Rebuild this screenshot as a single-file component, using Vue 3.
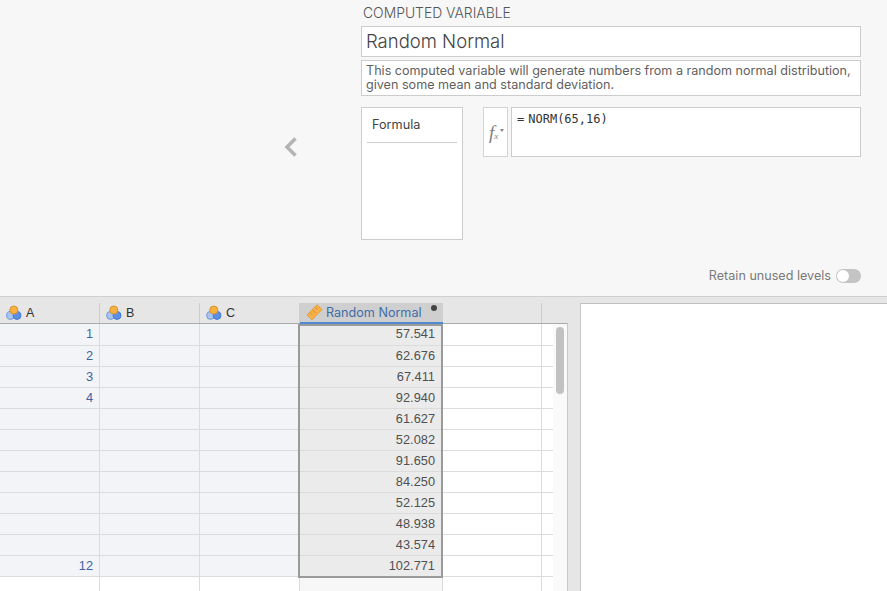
<template>
  <div class="app">
    <section class="editor">
      <div class="back">
        <svg width="16" height="22" viewBox="0 0 16 22"><path d="M12.5 2.5 L4 11 L12.5 19.5" fill="none" stroke="#b4b4b4" stroke-width="3.6" /></svg>
      </div>
      <div class="form">
        <div class="kicker">COMPUTED VARIABLE</div>
        <div class="name">Random Normal</div>
        <div class="desc">This computed variable will generate numbers from a random normal distribution,<br>given some mean and standard deviation.</div>
        <div class="formula-row">
          <div class="formula-tab">
            <div class="tab-label">Formula</div>
          </div>
          <div class="fx">
            <span class="fx-f">f</span><span class="fx-x">x</span>
            <span class="fx-caret"></span>
          </div>
          <div class="formula-input"><span class="eq">=</span>NORM(65,16)</div>
        </div>
      </div>
      <div class="retain">
        <span>Retain unused levels</span>
        <span class="toggle"><span class="knob"></span></span>
      </div>
    </section>

    <section class="bottom">
      <div class="sheet">
        <div class="grid">
          <div class="head-row">
            <div v-for="col in columns" :key="col.key" class="th" :class="[col.cls, { active: col.active }]">
              <svg v-if="col.active" class="ico" width="18" height="17" viewBox="0 0 18 17">
                <path d="M1 11 L11 0.8 L16 5.5 L6 15.8 Z" fill="#f5b04c" stroke="#e8a035" stroke-width="1" />
                <path d="M4 8.5 L6 10.5 M6.5 6 L9.5 9 M9.5 3.5 L11.5 5.5" stroke="#d98c20" stroke-width="1" fill="none" />
              </svg>
              <svg v-else-if="col.name" class="ico" width="16" height="16" viewBox="0 0 16 16">
                <circle cx="4.6" cy="10.4" r="4" fill="#a9c4f2" stroke="#6e97dd" />
                <circle cx="11" cy="10.4" r="4" fill="#5b8fe6" stroke="#4a7bcb" />
                <circle cx="7.8" cy="5" r="4" fill="#f6b143" stroke="#dc9326" />
              </svg>
              <span>{{ col.name }}</span>
              <span v-if="col.active" class="dot"></span>
            </div>
          </div>
          <div v-for="(row, i) in rows" :key="i" class="row">
            <div class="td ca num">{{ row.a }}</div>
            <div class="td cb"></div>
            <div class="td cc"></div>
            <div class="td cr">{{ row.r }}</div>
            <div class="td ce"></div>
            <div class="td cf"></div>
          </div>
          <div class="row last">
            <div class="td ca"></div>
            <div class="td cb"></div>
            <div class="td cc"></div>
            <div class="td cr"></div>
            <div class="td ce"></div>
            <div class="td cf"></div>
          </div>
          <div class="selection"></div>
        </div>
        <div class="gutter"><div class="thumb"></div></div>
      </div>
      <div class="results"></div>
    </section>
  </div>
</template>

<script setup>
const columns = [
  { key: 'a', name: 'A', cls: 'ca' },
  { key: 'b', name: 'B', cls: 'cb' },
  { key: 'c', name: 'C', cls: 'cc' },
  { key: 'r', name: 'Random Normal', cls: 'cr', active: true },
  { key: 'e', name: '', cls: 'ce' },
  { key: 'f', name: '', cls: 'cf' }
]

const values = ['57.541', '62.676', '67.411', '92.940', '61.627', '52.082', '91.650', '84.250', '52.125', '48.938', '43.574', '102.771']
const labels = { 0: 1, 1: 2, 2: 3, 3: 4, 11: 12 }
const rows = values.map((r, i) => ({ r, a: labels[i] ?? '' }))
</script>

<style>
html, body { margin: 0; overflow: hidden; }
</style>

<style scoped>
.app {
  width: 887px;
  height: 591px;
  display: flex;
  flex-direction: column;
  overflow: hidden;
  font-family: Inter, "Liberation Sans", sans-serif;
  background: #e6e6e6;
}

.editor {
  height: 297px;
  flex: none;
  box-sizing: border-box;
  position: relative;
  display: flex;
  background: #f7f7f7;
  border-bottom: 1px solid #d0d0d0;
}

.back {
  width: 361px;
  box-sizing: border-box;
  padding: 136px 62px 0 0;
  display: flex;
  justify-content: flex-end;
  align-items: flex-start;
}

.form {
  width: 500px;
  padding-top: 6px;
}

.kicker {
  font-size: 13.9px;
  font-weight: 300;
  line-height: 15px;
  color: #555;
  padding-left: 2px;
  margin-bottom: 5px;
}

.name {
  box-sizing: border-box;
  height: 31px;
  background: #fff;
  border: 1px solid #ccc;
  padding-left: 4px;
  font-size: 18.5px;
  font-weight: 300;
  line-height: 29px;
  color: #444;
}

.desc {
  box-sizing: border-box;
  height: 36px;
  margin-top: 3px;
  background: #fff;
  border: 1px solid #ccc;
  padding: 3px 4px;
  font-size: 12.6px;
  line-height: 14px;
  color: #5f5f5f;
  white-space: nowrap;
}

.formula-row {
  display: flex;
  margin-top: 11px;
  align-items: flex-start;
}

.formula-tab {
  box-sizing: border-box;
  width: 102px;
  height: 133px;
  background: #fff;
  border: 1px solid #ccc;
  padding: 0 5px;
}

.tab-label {
  height: 34px;
  border-bottom: 1px solid #ccc;
  padding-left: 5px;
  font-size: 12.7px;
  line-height: 34px;
  color: #444;
}

.fx {
  box-sizing: border-box;
  width: 25px;
  height: 50px;
  margin-left: 20px;
  padding-left: 5px;
  background: #fff;
  border: 1px solid #d4d4d4;
  display: flex;
  align-items: center;
}

.fx-f {
  font-family: "Liberation Serif", serif;
  font-style: italic;
  font-size: 19px;
  line-height: 19px;
  color: #808080;
}

.fx-x {
  font-family: "Liberation Serif", serif;
  font-style: italic;
  font-size: 9px;
  line-height: 9px;
  margin-top: 9px;
  color: #808080;
}

.fx-caret {
  width: 0;
  height: 0;
  margin-left: 2px;
  margin-top: -3px;
  border: 2.5px solid transparent;
  border-top: 3px solid #888;
  border-bottom: 0;
}

.formula-input {
  box-sizing: border-box;
  width: 350px;
  height: 50px;
  margin-left: 3px;
  background: #fff;
  border: 1px solid #ccc;
  padding: 4px 5px;
  font-family: "DejaVu Sans Mono", monospace;
  font-size: 12px;
  line-height: 14px;
  color: #333;
  white-space: pre;
}

.eq {
  margin-right: 4px;
}

.retain {
  position: absolute;
  right: 26px;
  top: 269px;
  display: flex;
  align-items: center;
  gap: 5px;
  font-size: 12.6px;
  line-height: 14px;
  color: #7a7a7a;
}

.toggle {
  width: 25px;
  height: 14px;
  border-radius: 7px;
  background: #c4c4c4;
  box-sizing: border-box;
  padding: 1px;
}

.knob {
  display: block;
  width: 12px;
  height: 12px;
  border-radius: 50%;
  background: #fff;
}

.bottom {
  flex: 1;
  display: flex;
  min-height: 0;
}

.sheet {
  width: 568px;
  display: flex;
  flex: none;
  padding-top: 6px;
  box-sizing: border-box;
  background: #e6e6e6;
}

.grid {
  position: relative;
  width: 553px;
  flex: none;
  background: #fff;
}

.head-row {
  display: flex;
  height: 21px;
  background: #e6e6e6;
  border-bottom: 1px solid #aaa;
  box-sizing: border-box;
}

.th {
  display: flex;
  align-items: center;
  gap: 4px;
  box-sizing: border-box;
  padding-left: 6px;
  border-right: 1px solid #cdcdcd;
  font-family: "Liberation Sans", sans-serif;
  font-size: 12.5px;
  color: #333;
  position: relative;
}

.th.cf {
  border-right: 0;
}

.th.active {
  background: #cfcfcf;
  color: #3e6da9;
  font-family: Inter, "Liberation Sans", sans-serif;
  border-right: 0;
  border-bottom: 2px solid #4f8ad0;
  height: 21px;
  gap: 2px;
  font-size: 12.6px;
}

.dot {
  position: absolute;
  right: 6px;
  top: 2px;
  width: 6px;
  height: 6px;
  border-radius: 50%;
  background: #444;
}

.row {
  display: flex;
  height: 21px;
  box-sizing: border-box;
  border-bottom: 1px solid #dcdcdc;
}

.head-row + .row {
  height: 22px;
}

.row.last {
  height: 20px;
  border-bottom: 0;
}

.td {
  box-sizing: border-box;
  border-right: 1px solid #dcdcdc;
  padding-right: 7px;
  text-align: right;
  font-family: "Liberation Sans", sans-serif;
  font-size: 12.8px;
  line-height: 20px;
  color: #505050;
}

.ca { width: 100px; }
.cb { width: 100px; }
.cc { width: 100px; }
.cr { width: 143px; }
.th.cr { width: 143px; border-right: 0; }
.ce { width: 99px; }
.cf { width: 11px; border-right: 0; }

.row .ca, .row .cb, .row .cc { background: #f3f4f8; }
.row .cr { background: #ebebeb; }
.row.last .ca, .row.last .cb, .row.last .cc { background: #fff; }
.row.last .cr { background: #f7f7f7; }

.num {
  color: #3e62a3;
  padding-right: 6px;
}

.selection {
  position: absolute;
  left: 298px;
  top: 21px;
  width: 145px;
  height: 254px;
  box-sizing: border-box;
  border: 2px solid #9a9a9a;
  pointer-events: none;
}

.gutter {
  width: 15px;
  flex: none;
  position: relative;
  background: #fafafa;
  border-top: 1px solid #aaa;
  border-right: 1px solid #c8c8c8;
  margin-top: 20px;
  box-sizing: border-box;
}

.thumb {
  position: absolute;
  left: 3px;
  top: 3px;
  width: 8px;
  height: 67px;
  border-radius: 4px;
  background: #c2c2c2;
}

.results {
  flex: 1;
  margin: 6px 0 0 12px;
  background: #fff;
  border-left: 1px solid #c8c8c8;
  border-top: 1px solid #c0c0c0;
}
</style>
